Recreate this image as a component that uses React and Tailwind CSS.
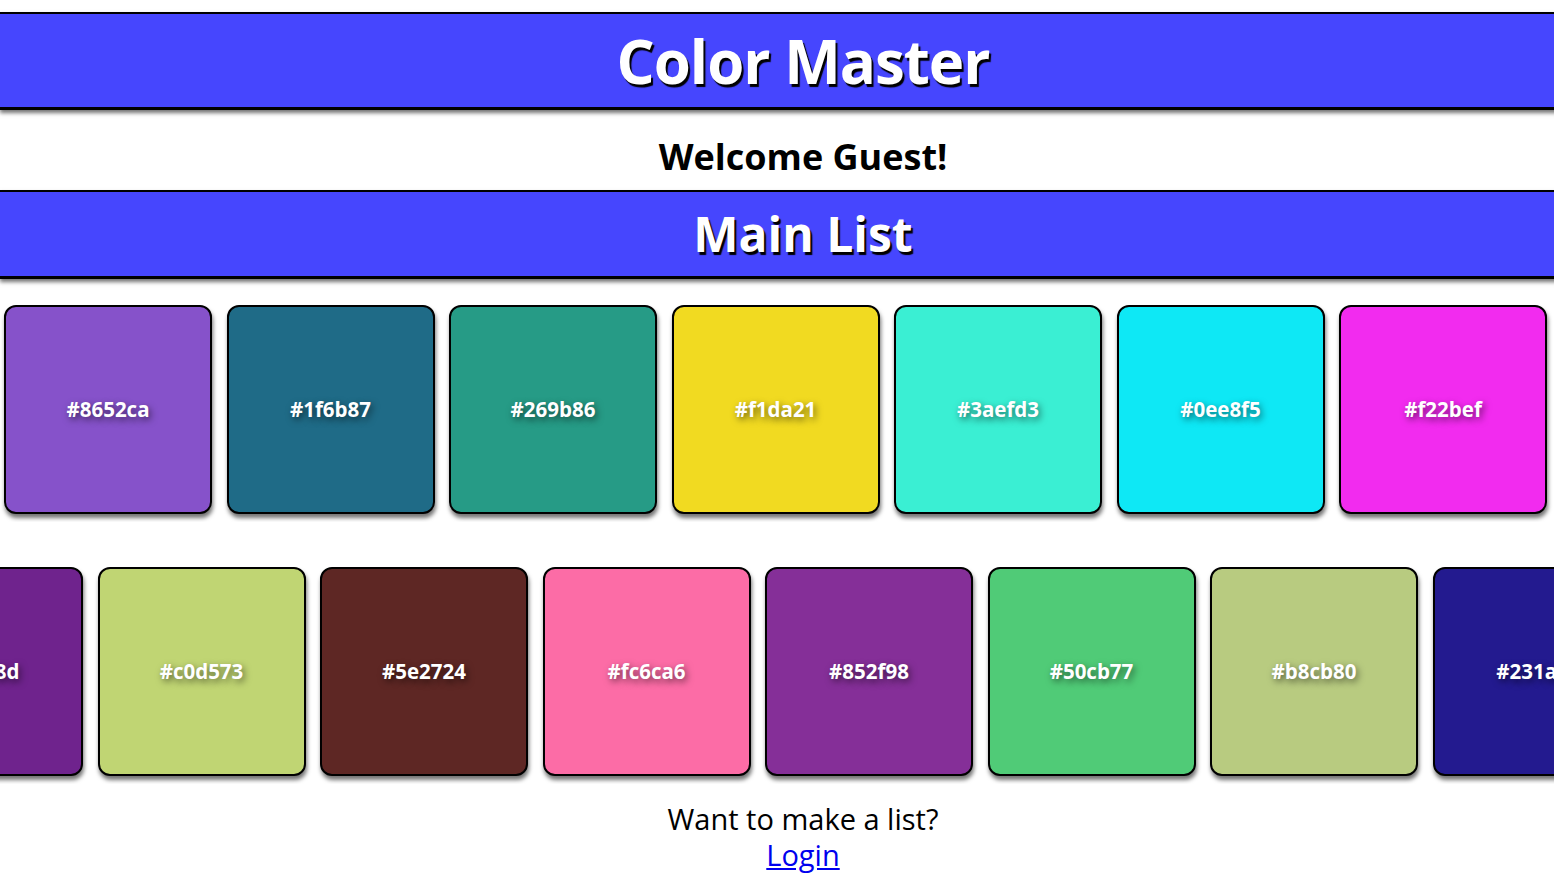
import React from 'react';

const font = { fontFamily: '"Open Sans", "Noto Sans", sans-serif' };

const topRow = ['#8652ca', '#1f6b87', '#269b86', '#f1da21', '#3aefd3', '#0ee8f5', '#f22bef'];
const bottomRow = ['#6f238d', '#c0d573', '#5e2724', '#fc6ca6', '#852f98', '#50cb77', '#b8cb80', '#231a8f'];

const Swatch = ({ color }) => {
  return (
    <div
      className="w-[208px] h-[209px] shrink-0 rounded-[12px] border-2 border-black flex items-center justify-center shadow-[1px_4px_4px_rgba(0,0,0,0.55)]"
      style={{ backgroundColor: color }}
    >
      <span className="text-white font-bold text-[20.5px] [text-shadow:2px_3px_7px_rgba(0,0,0,0.55)]">
        {color}
      </span>
    </div>
  );
};

const Banner = ({ children, className }) => {
  return (
    <div
      className={`border-t-2 border-b-[3px] border-black bg-[#4646fe] flex items-center justify-center shadow-[0_3px_4px_rgba(0,0,0,0.55)] ${className}`}
    >
      {children}
    </div>
  );
};

const App = () => {
  return (
    <div className="w-[1606px] min-h-screen bg-white pb-6" style={font}>
      <Banner className="mt-3 h-[98px]">
        <h1 className="text-white font-bold text-[60px] leading-none tracking-[-1px] [text-shadow:2px_3px_1px_#000]">
          Color Master
        </h1>
      </Banner>

      <div className="h-[80px] flex justify-center pt-[26px]">
        <h2 className="text-black font-bold text-[36px] leading-[42px]">Welcome Guest!</h2>
      </div>

      <Banner className="h-[89px]">
        <h2 className="text-white font-bold text-[48px] leading-none [text-shadow:2px_3px_1px_#000]">
          Main List
        </h2>
      </Banner>

      <div className="mt-[26px] pb-2 overflow-hidden">
        <div className="flex gap-[14.5px] pl-[4px]">
          {topRow.map((c) => (
            <Swatch key={c} color={c} />
          ))}
        </div>
      </div>

      <div className="mt-[45px] pb-2 overflow-hidden">
        <div className="flex gap-[14.5px] -ml-[125px]">
          {bottomRow.map((c) => (
            <Swatch key={c} color={c} />
          ))}
        </div>
      </div>

      <div className="mt-[17px] flex flex-col items-center text-[29px] leading-[36px] text-black">
        <p>Want to make a list?</p>
        <a href="#" className="text-[#0000ee] underline">
          Login
        </a>
      </div>
    </div>
  );
};

export default App;
